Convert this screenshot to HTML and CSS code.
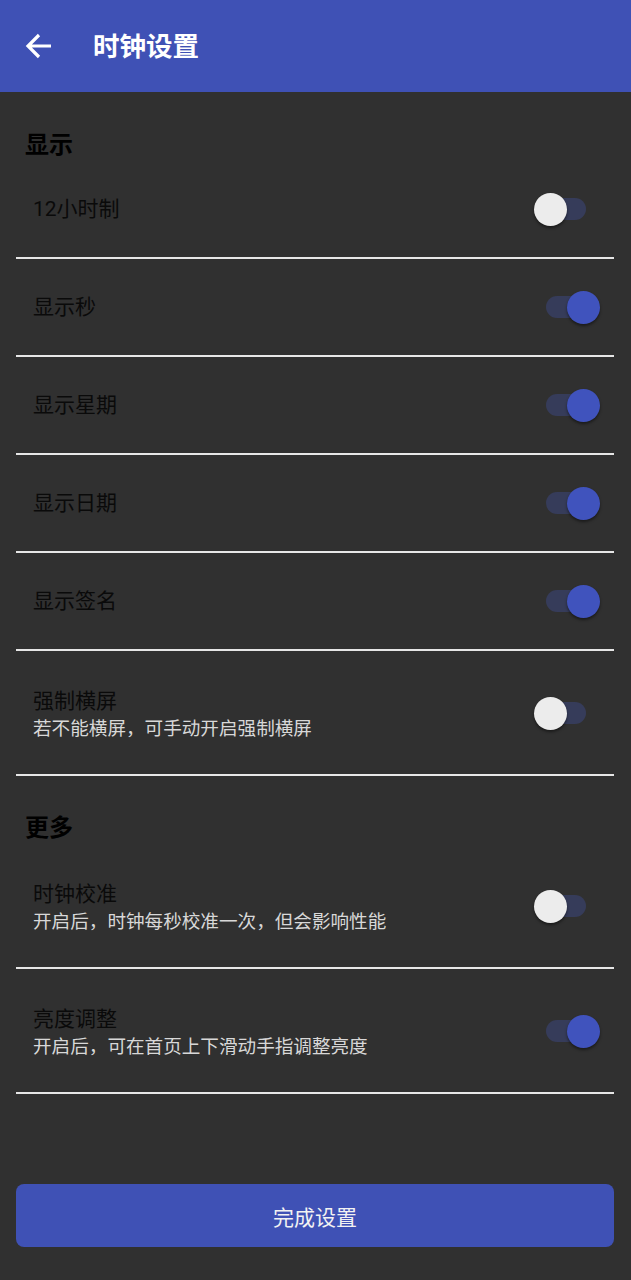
FILE: index.html
```html
<!DOCTYPE html>
<html lang="zh-CN">
<head>
<meta charset="utf-8">
<title>时钟设置</title>
<link rel="stylesheet" href="styles.css">
</head>
<body>
<div class="app">
  <header class="toolbar">
    <svg class="back" width="28" height="28" viewBox="0 0 28 28" aria-hidden="true">
      <path d="M26 14H4M14 3L3 14l11 11" fill="none" stroke="#fff" stroke-width="3.2" stroke-linecap="butt" stroke-linejoin="miter"/>
    </svg>
    <h1 class="toolbar-title">时钟设置</h1>
  </header>

  <main class="content">
    <h2 class="section-title first">显示</h2>
    <div class="row">
      <div class="row-text"><div class="row-title">12小时制</div></div>
      <div class="switch"><span class="track"></span><span class="thumb"></span></div>
    </div>
    <div class="row">
      <div class="row-text"><div class="row-title">显示秒</div></div>
      <div class="switch on"><span class="track"></span><span class="thumb"></span></div>
    </div>
    <div class="row">
      <div class="row-text"><div class="row-title">显示星期</div></div>
      <div class="switch on"><span class="track"></span><span class="thumb"></span></div>
    </div>
    <div class="row">
      <div class="row-text"><div class="row-title">显示日期</div></div>
      <div class="switch on"><span class="track"></span><span class="thumb"></span></div>
    </div>
    <div class="row">
      <div class="row-text"><div class="row-title">显示签名</div></div>
      <div class="switch on"><span class="track"></span><span class="thumb"></span></div>
    </div>
    <div class="row tall">
      <div class="row-text">
        <div class="row-title">强制横屏</div>
        <div class="row-sub">若不能横屏，可手动开启强制横屏</div>
      </div>
      <div class="switch"><span class="track"></span><span class="thumb"></span></div>
    </div>

    <h2 class="section-title">更多</h2>
    <div class="row tall">
      <div class="row-text">
        <div class="row-title">时钟校准</div>
        <div class="row-sub">开启后，时钟每秒校准一次，但会影响性能</div>
      </div>
      <div class="switch"><span class="track"></span><span class="thumb"></span></div>
    </div>
    <div class="row tall">
      <div class="row-text">
        <div class="row-title">亮度调整</div>
        <div class="row-sub">开启后，可在首页上下滑动手指调整亮度</div>
      </div>
      <div class="switch on"><span class="track"></span><span class="thumb"></span></div>
    </div>
  </main>

  <div class="footer">
    <button class="done-btn" type="button">完成设置</button>
  </div>
</div>
</body>
</html>
```

FILE: styles.css
```css
* { box-sizing: border-box; }

html, body {
  margin: 0;
  padding: 0;
  background: #303030;
}

body {
  font-family: Roboto, "Noto Sans CJK SC", sans-serif;
  width: 631px;
  height: 1280px;
  overflow: hidden;
}

.app {
  display: flex;
  flex-direction: column;
  height: 1280px;
}

.toolbar {
  height: 92px;
  background: #3f51b5;
  display: flex;
  align-items: center;
  flex-shrink: 0;
}

.back {
  margin-left: 25px;
  margin-top: -1px;
  flex-shrink: 0;
}

.toolbar-title {
  margin: 0 0 0 40px;
  color: #fff;
  font-family: "Noto Sans CJK SC", sans-serif;
  font-size: 26.5px;
  font-weight: 700;
  line-height: 32px;
  margin-top: -2px;
}

.content {
  flex: 1;
  padding: 0 17px 0 16px;
}

.section-title {
  margin: 34px 0 2px 0;
  padding-left: 9px;
  font-family: "Noto Sans CJK SC", sans-serif;
  font-size: 24px;
  font-weight: 700;
  line-height: 32px;
  color: #000;
}

.section-title.first {
  margin-top: 35px;
}

.row {
  display: flex;
  align-items: center;
  justify-content: space-between;
  min-height: 98px;
  padding: 0 14px 0 17px;
  border-bottom: 2px solid #e6e6e6;
}

.row.tall {
  min-height: 125px;
}

.row-text {
  display: flex;
  flex-direction: column;
}

.row-title {
  font-size: 21px;
  line-height: 28px;
  color: #0a0a0a;
}

.row.tall .row-text {
  margin-top: 6px;
}

.row-sub {
  font-size: 18.6px;
  line-height: 29px;
  color: #d8d8d8;
}

.switch {
  position: relative;
  width: 66px;
  height: 32px;
  flex-shrink: 0;
}

.switch .track {
  position: absolute;
  left: 12px;
  top: 5px;
  width: 40px;
  height: 22px;
  border-radius: 11px;
  background: #363c5a;
}

.switch .thumb {
  position: absolute;
  left: 0;
  top: 0;
  width: 33px;
  height: 33px;
  border-radius: 50%;
  background: #ececec;
  box-shadow: 0 2px 3px rgba(0, 0, 0, 0.45);
}

.switch.on .thumb {
  left: 33px;
  background: #4053bd;
}

.footer {
  padding: 0 17px 33px 16px;
  flex-shrink: 0;
}

.done-btn {
  display: block;
  width: 100%;
  height: 63px;
  border: 0;
  border-radius: 8px;
  background: #3f51b5;
  color: #f2f2f2;
  font-family: "Noto Sans CJK SC", sans-serif;
  font-size: 21px;
  line-height: 28px;
  cursor: pointer;
}
```
